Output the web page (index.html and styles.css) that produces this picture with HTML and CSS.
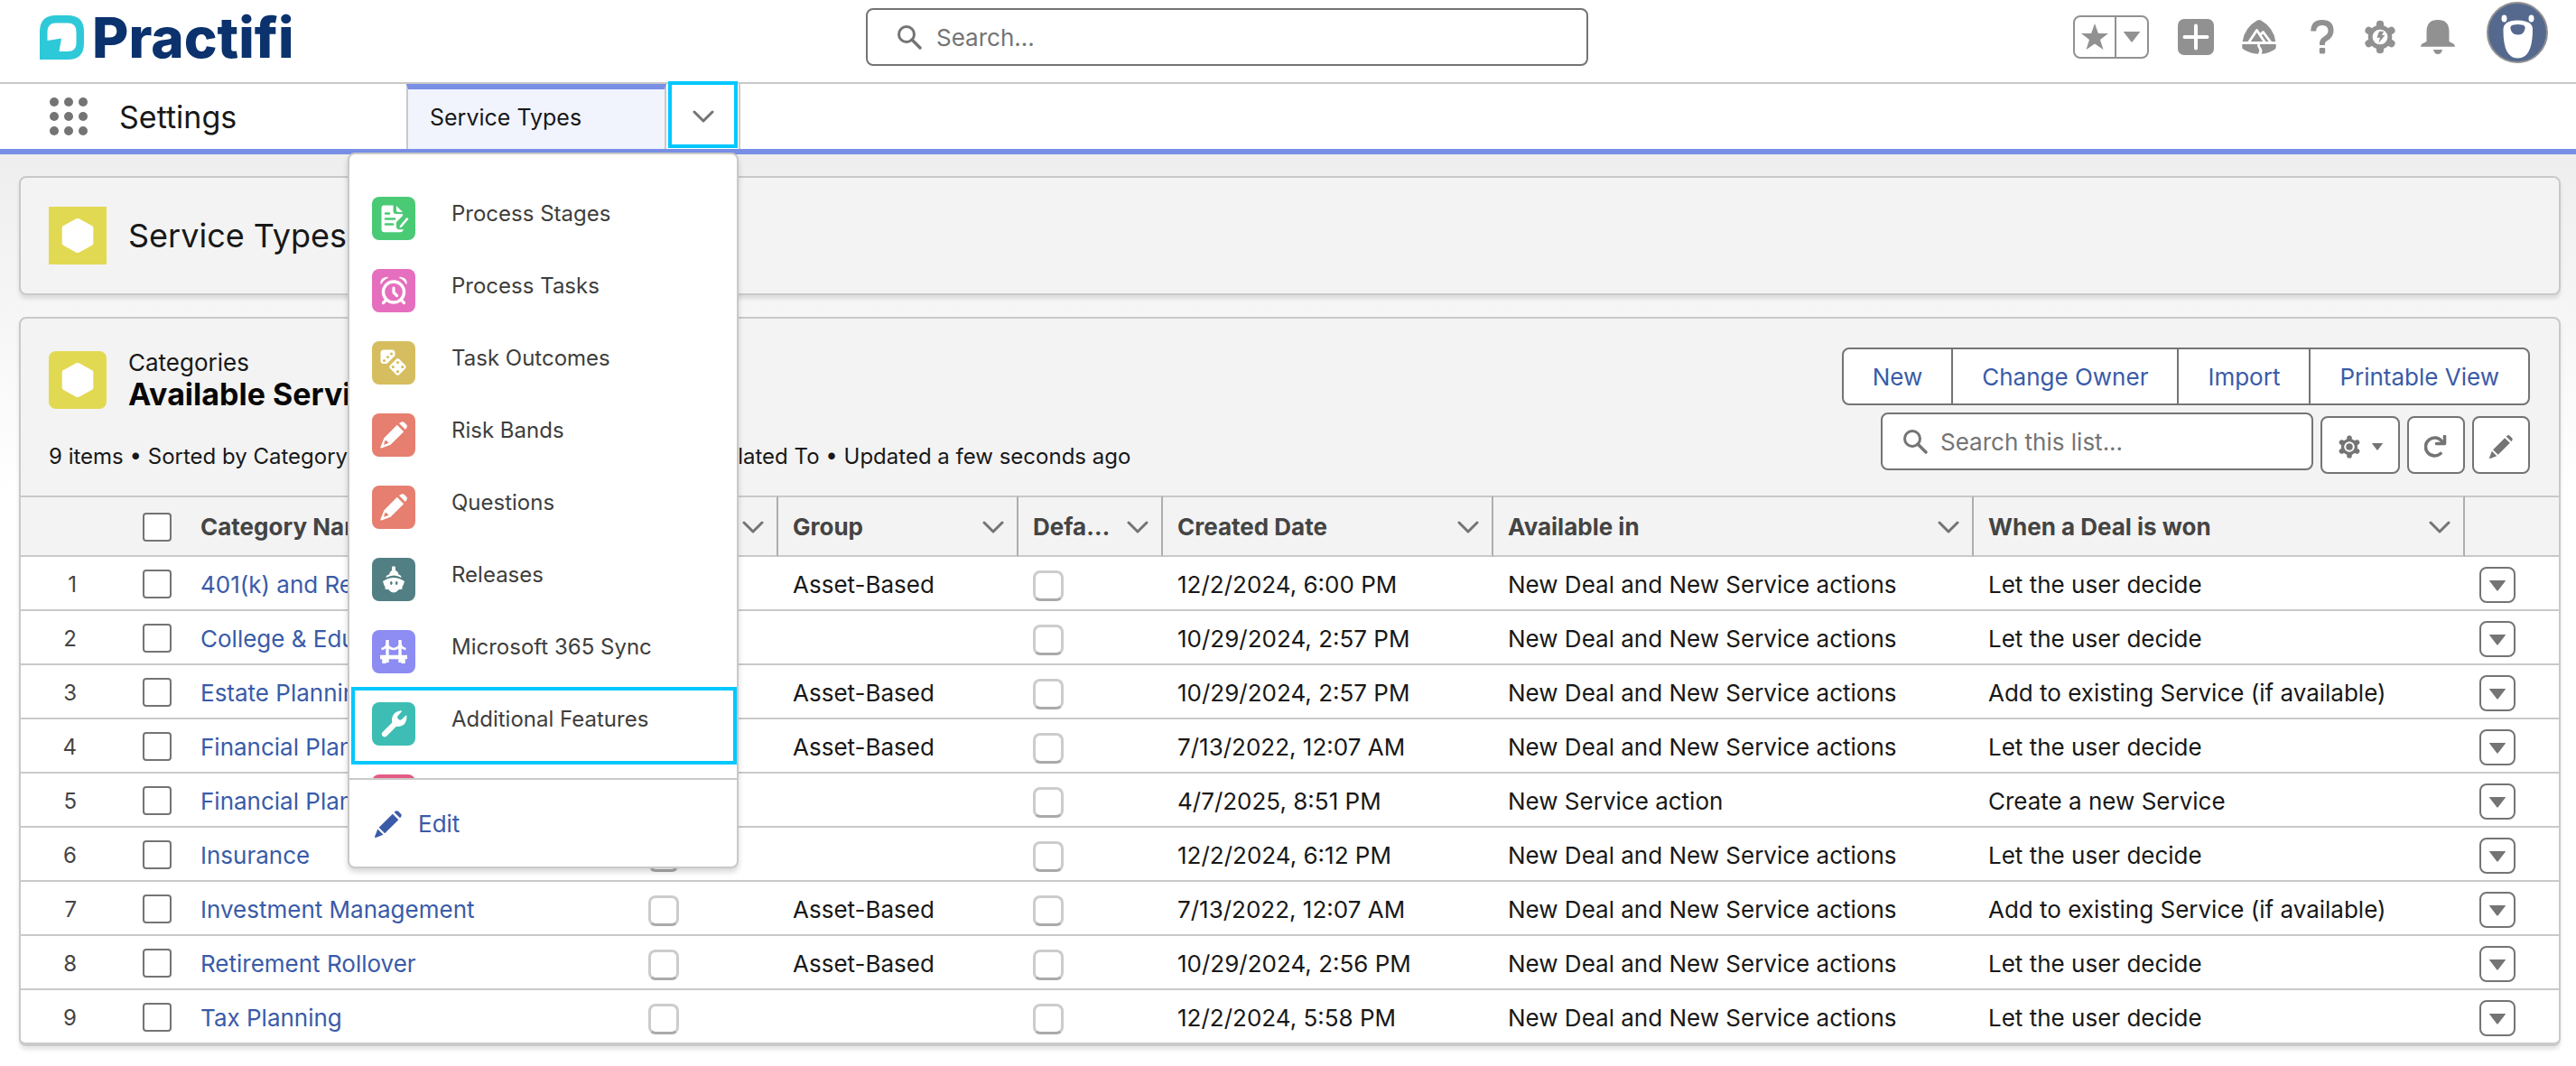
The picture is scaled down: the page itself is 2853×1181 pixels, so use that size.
FILE: index.html
```html
<!DOCTYPE html>
<html lang="en">
<head>
<meta charset="utf-8">
<title>Service Types | Practifi</title>
<link rel="stylesheet" href="styles.css">
</head>
<body>
<svg class="sprite" aria-hidden="true">
  <symbol id="i-search" viewBox="0 0 28 28"><circle cx="11" cy="11" r="8.5" fill="none" stroke="currentColor" stroke-width="3"/><path d="M17 17l9 9" stroke="currentColor" stroke-width="3.4" stroke-linecap="round"/></symbol>
  <symbol id="i-chevron" viewBox="0 0 24 14"><path d="M2 2l10 10L22 2" fill="none" stroke="currentColor" stroke-width="3" stroke-linecap="round" stroke-linejoin="round"/></symbol>
  <symbol id="i-caret" viewBox="0 0 18 12"><path d="M0.500 0h17q.8 0 .3.700L9.700 11.300q-.7.800-1.400 0L.2.700Q-.3 0 .5 0z" fill="currentColor"/></symbol>
  <symbol id="i-pencil" viewBox="0 0 30 30"><g fill="currentColor"><path d="M21.500 1.700l2-1.300q1.300-.7 2.500.4l3 3q1.100 1.200.4 2.500l-1.300 2z"/><path d="M19.800 3.700l6.500 6.500L11.200 25.200 4.700 18.700z"/><path d="M3.300 20.500l6.200 6.200-8.300 3.200Q-.2 30.200.1 28.800z"/></g></symbol>
  <symbol id="i-pencil-solid" viewBox="0 0 30 30"><path fill="#fff" d="M21 2l2.500-1.500q1.700-.9 3.200.5l2.300 2.300q1.400 1.500.5 3.200L28 9z"/><path fill="#fff" fill-rule="evenodd" d="M18.800 3.800l7.400 7.400L11.500 25.700 1.500 29.500Q0 29.800.4 28.300L4.400 18.300zM5.500 20.800L4 25.800l5.200-1.800q.3-1.400-.9-1.300.1-1.500-1.300-1.300z"/></symbol>
  <symbol id="i-hexagon" viewBox="0 0 64 64"><path d="M30.500 13.300q1.500-.8 3 0l14.500 8q1.300.8 1.300 2.300v16.800q0 1.500-1.300 2.300l-14.500 8q-1.500.8-3 0l-14.500-8q-1.300-.8-1.300-2.300V23.600q0-1.500 1.300-2.300z" fill="#fff"/></symbol>
  <symbol id="i-gear" viewBox="0 0 30 30"><g fill="currentColor"><rect x="11.800" y="0.500" width="6.400" height="29" rx="3"/><rect x="11.800" y="0.500" width="6.400" height="29" rx="3" transform="rotate(60 15 15)"/><rect x="11.800" y="0.500" width="6.400" height="29" rx="3" transform="rotate(120 15 15)"/><circle cx="15" cy="15" r="10.500"/></g></symbol>
</svg>

<header class="topbar">
  <a class="logo" href="#">
    <svg class="logo-mark" viewBox="0 0 49 49" aria-hidden="true"><path fill="#2ec9d8" fill-rule="evenodd" d="M0 49V18Q0 0 18 0h13q18 0 18 18v13q0 18-18 18zM8.500 28l15.500-2.500-2.500 14.500h9q10 0 10-9V18q0-9.500-9.500-9.500H18Q8.500 8.500 8.500 18z"/></svg>
    <span>Practifi</span>
  </a>
  <label class="search global-search">
    <svg class="search-icon" aria-hidden="true"><use href="#i-search"/></svg>
    <input type="search" placeholder="Search..." aria-label="Search">
  </label>
  <div class="tools">
    <div class="favorites">
      <button type="button" aria-label="Favorites"><svg width="30" height="30" viewBox="0 0 30 30"><path fill="currentColor" d="M15 0l3.900 11H30l-9 6.900L24.500 29 15 22.400 5.500 29 9 17.900 0 11h11.100z"/></svg></button>
      <button type="button" aria-label="Favorites list"><svg width="18" height="12"><use href="#i-caret"/></svg></button>
    </div>
    <button type="button" class="tool spaced" aria-label="Global actions"><svg width="40" height="40" viewBox="0 0 40 40"><rect width="40" height="40" rx="7" fill="currentColor"/><path d="M20 7.500v25M7.500 20h25" stroke="#fff" stroke-width="4" stroke-linecap="round"/></svg></button>
    <button type="button" class="tool spaced" aria-label="Guidance center"><svg width="38" height="38" viewBox="0 0 38 38"><path fill="currentColor" d="M.7 24Q3 8.500 17 .6q2-1.200 4 0Q35 8.500 37.300 24z"/><path fill="none" stroke="#fff" stroke-width="2.800" stroke-linejoin="round" d="M7.500 25L16.500 11.500 25.500 25M20 17l3.500-3.500L32 25"/><path fill="currentColor" d="M.3 27h17q-1 2.500 1 4.500 2 2.500-.5 6.200Q8 37.200.7 32q-.6-2-.4-5zM20 27h17.700q.3 3-.4 5-7 5.200-15.500 5.800 1.500-4-.5-6.500Q19.300 29 20 27z"/></svg></button>
    <button type="button" class="tool" aria-label="Help"><svg width="26" height="38" viewBox="0 0 26 38"><path d="M3.200 12.500Q3.500 3 12.800 3q9.700 0 9.700 9 0 5.500-5.500 8.500-4 2.300-4 5.500v2" fill="none" stroke="currentColor" stroke-width="6"/><rect x="9.800" y="31" width="6.400" height="6.400" rx="1.300" fill="currentColor"/></svg></button>
    <button type="button" class="tool" aria-label="Setup"><svg width="38" height="38" viewBox="0 0 30 30"><use href="#i-gear" width="30" height="30"/><circle cx="15" cy="15" r="6.600" fill="#fff"/><path fill="currentColor" d="M14.200 10h4l-1.500 3.500h2.600l-5.600 6.800 1.300-4.700h-2.800z"/></svg></button>
    <button type="button" class="tool" aria-label="Notifications"><svg width="38" height="38" viewBox="0 0 38 38"><path fill="currentColor" d="M6.500 24V13Q6.500 0 19 0t12.500 13v11l5.200 2.700q1.300 1 1.100 3H.2q-.2-2 1.100-3zM14 33h10q-1 5-5 5t-5-5z"/></svg></button>
    <button type="button" class="avatar" aria-label="View profile"><svg width="68" height="68" viewBox="0 0 68 68"><circle cx="34" cy="34" r="33" fill="#54698d" stroke="#919191" stroke-width="2"/><ellipse cx="19.500" cy="18.500" rx="3" ry="4" fill="#fff"/><ellipse cx="49.500" cy="18.500" rx="3" ry="4" fill="#fff"/><path fill="#fff" d="M34.500 20.500q8 0 13 3 3.500 2.500 3.500 7 0 32-16.500 32t-16-32q0-4.500 3.500-7 4-3 12.500-3z"/><path fill="#54698d" d="M34.500 25q5 0 7 1.500 1.500 1 1 3.500-1.500 6.500-8 6.500t-8-6.500q-.5-2.500 1-3.500 2-1.500 7-1.500z"/></svg></button>
  </div>
</header>

<nav class="appnav" aria-label="Settings">
  <div class="app">
    <button type="button" class="waffle" aria-label="App launcher"><i></i><i></i><i></i><i></i><i></i><i></i><i></i><i></i><i></i></button>
    <span class="app-name">Settings</span>
  </div>
  <a class="tab" href="#">Service Types</a>
  <div class="tab-more">
    <button type="button" class="more-button marked" aria-label="More items" aria-expanded="true"><svg width="24" height="14"><use href="#i-chevron"/></svg></button>
    <div class="menu">
      <ul class="menu-list">
        <li><a href="#"><svg class="obj green" viewBox="0 0 48 48"><path fill="#fff" d="M13 9.500h10.500V16q0 3 3 3h7.500v2l-7 7v6q1 2.500 3 2.300h5q-1 3-4 3H14q-3.500 0-3.500-3.500V13q0-3.500 2.500-3.500zM27 10l7 7h-5q-2 0-2-2zM38.500 23l2 1.500-7.500 9-2.500 1 .6-2.500z"/><path d="M15 18.500h4M15 24.500h10M15 30.500h8" stroke="#4bca76" stroke-width="2.600" stroke-linecap="round"/></svg><span>Process Stages</span></a></li>
        <li><a href="#"><svg class="obj pink" viewBox="0 0 48 48"><circle cx="24" cy="25.500" r="11.500" fill="none" stroke="#fff" stroke-width="3.400"/><path d="M24 21v5l3.500 3.500M16 34l-3.500 3.500M32 34l3.500 3.500" fill="none" stroke="#fff" stroke-width="3.200" stroke-linecap="round"/><path fill="#fff" d="M10 16q0-6 7-6.500-5 2-7 6.500zM38 16q0-6-7-6.500 5 2 7 6.500z" stroke="#fff" stroke-width="1.500" stroke-linejoin="round"/></svg><span>Process Tasks</span></a></li>
        <li><a href="#"><svg class="obj gold" viewBox="0 0 48 48"><path fill="#fff" d="M13 9.500h9q3.500 0 3.500 3.500v3L18 23.500q-1.500 1.500-3 1.500h-2q-3.500 0-3.500-3.500V13q0-3.500 3.500-3.500z"/><rect x="21.200" y="21.200" width="14.500" height="14.500" rx="2.500" fill="#fff" transform="rotate(45 28.500 28.500)"/><g fill="#d6bd5f"><circle cx="21.500" cy="14" r="1.600"/><circle cx="17.500" cy="17.500" r="1.600"/><circle cx="13.500" cy="21.500" r="1.600"/><circle cx="28.500" cy="23.500" r="1.600"/><circle cx="23.300" cy="28.500" r="1.600"/><circle cx="33.700" cy="28.500" r="1.600"/><circle cx="28.500" cy="33.700" r="1.600"/></g></svg><span>Task Outcomes</span></a></li>
        <li><a href="#"><svg class="obj coral" viewBox="0 0 48 48"><use href="#i-pencil-solid" x="9" y="9" width="30" height="30"/></svg><span>Risk Bands</span></a></li>
        <li><a href="#"><svg class="obj coral" viewBox="0 0 48 48"><use href="#i-pencil-solid" x="9" y="9" width="30" height="30"/></svg><span>Questions</span></a></li>
        <li><a href="#"><svg class="obj teal" viewBox="0 0 48 48"><path fill="#fff" d="M22 10q2-1.500 4 0v4q3 1 3.500 4.500 3 .5 3 3.500-8-5-17 0 0-3 3.500-3.500Q19.500 15 22 14z"/><path fill="#fff" fill-rule="evenodd" d="M12 26q12-8 24 0-1 4-2.500 6v2.500q-2 .5-3.500.5-3 3.500-6 3.500t-6-3.500q-1.500 0-3.500-.5V32Q13 30 12 26zM21.300 26a1.300 2 0 1 0 .01 0zM27.200 26a1.300 2 0 1 0 .01 0z"/></svg><span>Releases</span></a></li>
        <li><a href="#"><svg class="obj violet" viewBox="0 0 48 48"><g fill="none" stroke="#fff" stroke-width="3.400"><path d="M9 30h30" stroke-width="4.500"/><path d="M17 11v25M31 11v25"/><path d="M13.500 30v7M34.500 30v7" stroke-width="4.500"/><path d="M10.500 21q5-1 6-5 3 5 7.500 5t7.500-5q1 4 6 5" stroke-width="2.600"/></g></svg><span>Microsoft 365 Sync</span></a></li>
        <li class="marked"><a href="#"><svg class="obj mint" viewBox="0 0 48 48"><path fill="#fff" d="M33 10.300l-4.500 5q-1 1.500.3 3l.8.800q1.500 1.200 3 .2l4.700-4.600q1-.6 1.200.7 0 7-4 9.800-3.500 2.300-7.500 1.500L16 37.800q-2 1.500-4.200-.2-2-2.300-.2-4.300L22.300 22.500q-1-5 1.200-8.300Q26.500 9.600 32 9.300q1.500 0 1 1z"/></svg><span>Additional Features</span></a></li>
        <li><a href="#" aria-label="More"><svg class="obj rose" viewBox="0 0 48 48"></svg></a></li>
      </ul>
      <a class="menu-edit" href="#"><svg width="30" height="30"><use href="#i-pencil"/></svg>Edit</a>
    </div>
  </div>
</nav>

<main class="page">
  <section class="card page-head">
    <svg class="entity square" viewBox="0 0 64 64"><use href="#i-hexagon"/></svg>
    <h1>Service Types</h1>
  </section>

  <section class="card list">
    <div class="list-head">
      <div class="list-info">
        <div class="list-title">
          <svg class="entity" viewBox="0 0 64 64"><use href="#i-hexagon"/></svg>
          <div>
            <p>Categories</p>
            <h2>Available Services</h2>
          </div>
        </div>
        <p class="meta">9 items • Sorted by Category Name • Filtered by all categories - Related To • Updated a few seconds ago</p>
      </div>
      <div class="list-actions">
        <div class="button-group">
          <button type="button">New</button>
          <button type="button">Change Owner</button>
          <button type="button">Import</button>
          <button type="button">Printable View</button>
        </div>
        <div class="list-tools">
          <label class="search list-search">
            <svg class="search-icon" aria-hidden="true"><use href="#i-search"/></svg>
            <input type="search" placeholder="Search this list..." aria-label="Search this list">
          </label>
          <button type="button" class="icon-button wide" aria-label="List view controls"><svg width="26" height="26" viewBox="0 0 30 30"><use href="#i-gear" width="30" height="30"/><circle cx="15" cy="15" r="5.500" fill="none" stroke="#fff" stroke-width="2.400"/></svg><svg width="12" height="8"><use href="#i-caret"/></svg></button>
          <button type="button" class="icon-button" aria-label="Refresh"><svg width="26" height="26" viewBox="0 0 26 26"><path d="M18 20.500A10 10 0 1 1 19.500 7" fill="none" stroke="currentColor" stroke-width="3.600" stroke-linecap="round"/><path d="M13.500 9.500h9V1.500" fill="none" stroke="currentColor" stroke-width="3.600" stroke-linecap="round" stroke-linejoin="round"/></svg></button>
          <button type="button" class="icon-button" aria-label="Edit list"><svg width="26" height="26"><use href="#i-pencil"/></svg></button>
        </div>
      </div>
    </div>

    <table>
      <colgroup><col class="c-num"><col class="c-check"><col class="c-name"><col class="c-active"><col class="c-group"><col class="c-default"><col class="c-created"><col class="c-available"><col class="c-won"><col class="c-menu"></colgroup>
      <thead>
        <tr>
          <th></th>
          <th class="plain"><input type="checkbox" class="box" aria-label="Select all"></th>
          <th class="plain"><div><span>Category Name</span><svg><use href="#i-chevron"/></svg></div></th>
          <th><div><span>Active</span><svg><use href="#i-chevron"/></svg></div></th>
          <th><div><span>Group</span><svg><use href="#i-chevron"/></svg></div></th>
          <th><div><span>Default</span><svg><use href="#i-chevron"/></svg></div></th>
          <th><div><span>Created Date</span><svg><use href="#i-chevron"/></svg></div></th>
          <th><div><span>Available in</span><svg><use href="#i-chevron"/></svg></div></th>
          <th><div><span>When a Deal is won</span><svg><use href="#i-chevron"/></svg></div></th>
          <th class="plain"></th>
        </tr>
      </thead>
      <tbody>
        <tr><td class="num">1</td><td><input type="checkbox" class="box" aria-label="Select row 1"></td><td><a href="#">401(k) and Retirement</a></td><td><input type="checkbox" class="flag" disabled aria-label="Active"></td><td>Asset-Based</td><td><input type="checkbox" class="flag" disabled aria-label="Default"></td><td>12/2/2024, 6:00 PM</td><td>New Deal and New Service actions</td><td>Let the user decide</td><td><button type="button" class="row-menu" aria-label="Row actions"><svg><use href="#i-caret"/></svg></button></td></tr>
        <tr><td class="num">2</td><td><input type="checkbox" class="box" aria-label="Select row 2"></td><td><a href="#">College &amp; Education</a></td><td><input type="checkbox" class="flag" disabled aria-label="Active"></td><td></td><td><input type="checkbox" class="flag" disabled aria-label="Default"></td><td>10/29/2024, 2:57 PM</td><td>New Deal and New Service actions</td><td>Let the user decide</td><td><button type="button" class="row-menu" aria-label="Row actions"><svg><use href="#i-caret"/></svg></button></td></tr>
        <tr><td class="num">3</td><td><input type="checkbox" class="box" aria-label="Select row 3"></td><td><a href="#">Estate Planning</a></td><td><input type="checkbox" class="flag" disabled aria-label="Active"></td><td>Asset-Based</td><td><input type="checkbox" class="flag" disabled aria-label="Default"></td><td>10/29/2024, 2:57 PM</td><td>New Deal and New Service actions</td><td>Add to existing Service (if available)</td><td><button type="button" class="row-menu" aria-label="Row actions"><svg><use href="#i-caret"/></svg></button></td></tr>
        <tr><td class="num">4</td><td><input type="checkbox" class="box" aria-label="Select row 4"></td><td><a href="#">Financial Planning</a></td><td><input type="checkbox" class="flag" disabled aria-label="Active"></td><td>Asset-Based</td><td><input type="checkbox" class="flag" disabled aria-label="Default"></td><td>7/13/2022, 12:07 AM</td><td>New Deal and New Service actions</td><td>Let the user decide</td><td><button type="button" class="row-menu" aria-label="Row actions"><svg><use href="#i-caret"/></svg></button></td></tr>
        <tr><td class="num">5</td><td><input type="checkbox" class="box" aria-label="Select row 5"></td><td><a href="#">Financial Planning</a></td><td><input type="checkbox" class="flag" disabled aria-label="Active"></td><td></td><td><input type="checkbox" class="flag" disabled aria-label="Default"></td><td>4/7/2025, 8:51 PM</td><td>New Service action</td><td>Create a new Service</td><td><button type="button" class="row-menu" aria-label="Row actions"><svg><use href="#i-caret"/></svg></button></td></tr>
        <tr><td class="num">6</td><td><input type="checkbox" class="box" aria-label="Select row 6"></td><td><a href="#">Insurance</a></td><td><input type="checkbox" class="flag" disabled aria-label="Active"></td><td></td><td><input type="checkbox" class="flag" disabled aria-label="Default"></td><td>12/2/2024, 6:12 PM</td><td>New Deal and New Service actions</td><td>Let the user decide</td><td><button type="button" class="row-menu" aria-label="Row actions"><svg><use href="#i-caret"/></svg></button></td></tr>
        <tr><td class="num">7</td><td><input type="checkbox" class="box" aria-label="Select row 7"></td><td><a href="#">Investment Management</a></td><td><input type="checkbox" class="flag" disabled aria-label="Active"></td><td>Asset-Based</td><td><input type="checkbox" class="flag" disabled aria-label="Default"></td><td>7/13/2022, 12:07 AM</td><td>New Deal and New Service actions</td><td>Add to existing Service (if available)</td><td><button type="button" class="row-menu" aria-label="Row actions"><svg><use href="#i-caret"/></svg></button></td></tr>
        <tr><td class="num">8</td><td><input type="checkbox" class="box" aria-label="Select row 8"></td><td><a href="#">Retirement Rollover</a></td><td><input type="checkbox" class="flag" disabled aria-label="Active"></td><td>Asset-Based</td><td><input type="checkbox" class="flag" disabled aria-label="Default"></td><td>10/29/2024, 2:56 PM</td><td>New Deal and New Service actions</td><td>Let the user decide</td><td><button type="button" class="row-menu" aria-label="Row actions"><svg><use href="#i-caret"/></svg></button></td></tr>
        <tr><td class="num">9</td><td><input type="checkbox" class="box" aria-label="Select row 9"></td><td><a href="#">Tax Planning</a></td><td><input type="checkbox" class="flag" disabled aria-label="Active"></td><td></td><td><input type="checkbox" class="flag" disabled aria-label="Default"></td><td>12/2/2024, 5:58 PM</td><td>New Deal and New Service actions</td><td>Let the user decide</td><td><button type="button" class="row-menu" aria-label="Row actions"><svg><use href="#i-caret"/></svg></button></td></tr>
      </tbody>
    </table>
  </section>
</main>
</body>
</html>
```

FILE: styles.css
```css
:root {
  --line: #c9c9c9;
  --icon: #747474;
  --tool: #919191;
  --text: #181818;
  --link: #3a5ba8;
  --brand: #788fe5;
  --mark: #00c8ff;
  --panel: #f3f3f3;
}

* { box-sizing: border-box; }

body {
  margin: 0;
  background: #fff;
  color: var(--text);
  font: 26px/36px Inter, "Liberation Sans", sans-serif;
}

button, input { font: inherit; color: inherit; }
button { margin: 0; padding: 0; border: 0; background: none; cursor: pointer; }
button svg { display: block; flex: none; }
a { color: var(--link); text-decoration: none; }
h1, h2, p, ul { margin: 0; padding: 0; list-style: none; }
.sprite { position: absolute; width: 0; height: 0; }

/* Top bar */
.topbar {
  display: grid;
  grid-template-columns: 959fr 800fr 1094fr;
  align-items: start;
  height: 93px;
  border-bottom: 2px solid var(--line);
}
.logo {
  display: flex;
  align-items: center;
  gap: 9px;
  height: 83px;
  padding-left: 44px;
  color: #0b326d;
  font-size: 62px;
  font-weight: 800;
}
.logo-mark { width: 49px; height: 49px; }
.search {
  display: flex;
  align-items: center;
  height: 64px;
  padding-left: 32px;
  border: 2px solid var(--icon);
  border-radius: 8px;
  background: #fff;
}
.search-icon { flex: none; width: 28px; height: 28px; color: var(--icon); }
.search input {
  flex: 1;
  min-width: 0;
  height: 100%;
  padding: 0 16px;
  border: 0;
  outline: 0;
  background: none;
}
.search input::placeholder { color: var(--icon); opacity: 1; }
.global-search { margin-top: 9px; }
.tools {
  display: flex;
  align-items: center;
  justify-content: flex-end;
  height: 82px;
  padding-right: 31px;
  color: var(--tool);
}
.favorites {
  display: flex;
  height: 48px;
  margin-right: 32px;
  border: 2px solid var(--tool);
  border-radius: 8px;
}
.favorites button { display: grid; place-items: center; width: 44px; }
.favorites button + button { width: 36px; border-left: 2px solid var(--tool); }
.tool { display: grid; place-items: center; width: 40px; margin-right: 24px; }
.tool.spaced { margin-right: 30px; }
.avatar { align-self: flex-start; margin: 2px 0 0 10px; }

/* App navigation */
.appnav {
  display: flex;
  height: 78px;
  border-bottom: 6px solid var(--brand);
}
.app { display: flex; align-items: center; gap: 35px; width: 450px; padding-left: 55px; }
.waffle { display: grid; grid-template-columns: repeat(3, 10px); gap: 6px; }
.waffle i { height: 10px; border-radius: 50%; background: var(--icon); }
.app-name { padding-top: 2px; font-size: 34px; }
.tab {
  display: flex;
  align-items: center;
  width: 288px;
  padding: 0 24px 4px;
  border: solid var(--line);
  border-width: 0 2px;
  border-top: 6px solid var(--brand);
  background: #f1f4fd;
  color: var(--text);
  font-size: 25px;
}
.tab-more { position: relative; width: 82px; padding-left: 2px; border-right: 2px solid var(--line); }
.more-button { display: grid; place-items: center; width: 77px; height: 74px; margin-top: -3px; padding-top: 4px; color: var(--icon); }
.more-button.marked { border: 4px solid var(--mark); background: #fff; }

/* Overflow menu */
.menu {
  position: absolute;
  z-index: 10;
  top: 76px;
  right: 0;
  width: 433px;
  border: 2px solid var(--line);
  border-radius: 8px;
  background: #fff;
  box-shadow: 0 4px 6px rgba(0, 0, 0, .16);
}
.menu-list { height: 691px; padding: 33px 3px 0 5px; overflow: hidden; }
.menu-list li { height: 80px; padding: 14px 20px; }
.menu-list li.marked { outline: 4px solid var(--mark); outline-offset: -1px; }
.menu-list a { display: flex; align-items: flex-start; gap: 40px; color: #3e3e3c; font-size: 24px; line-height: 38px; }
.obj { flex: none; width: 48px; height: 48px; border-radius: 8px; }
.green { background: #4bca76; }
.pink { background: #e56fbe; }
.gold { background: #d6bd5f; }
.coral { background: #e67f6f; }
.teal { background: #527f83; }
.violet { background: #8d8cf3; }
.mint { background: #3dbdb3; }
.rose { background: #e25c84; }
.menu-edit {
  display: flex;
  align-items: center;
  gap: 18px;
  height: 98px;
  padding: 2px 28px 0;
  border-top: 2px solid var(--line);
}

/* Page */
.page {
  display: grid;
  gap: 24px;
  padding: 24px 17px 20px 21px;
  background: linear-gradient(#eee, #fff 376px);
}
.card {
  min-width: 0;
  border: 2px solid var(--line);
  border-radius: 8px;
  background: var(--panel);
  box-shadow: 0 4px 4px rgba(0, 0, 0, .1);
}
.page-head { display: flex; align-items: center; gap: 24px; padding: 32px 31px; }
.entity { flex: none; width: 64px; height: 64px; border-radius: 8px; background: #e2d953; }
.entity.square { border-radius: 0; }
h1 { font-size: 36px; font-weight: 400; line-height: 40px; }
h2 { color: #080707; font-size: 34px; line-height: 36px; }

.list-head { display: flex; justify-content: space-between; padding: 32px 32px 24px 31px; }
.list-title { display: flex; align-items: flex-start; gap: 24px; height: 64px; margin-top: 4px; }
.list-title p { margin-top: -4px; line-height: 34px; }
.meta { margin-top: 35px; font-size: 24px; }
.list-actions { display: grid; justify-items: end; gap: 8px; }
.button-group {
  display: flex;
  height: 64px;
  border: 2px solid var(--icon);
  border-radius: 8px;
  background: #fff;
  color: var(--link);
}
.button-group button { padding: 1px 32px 0; }
.button-group button + button { border-left: 2px solid var(--icon); }
.list-tools { display: flex; align-items: flex-end; gap: 8px; }
.list-search { width: 479px; margin-bottom: 4px; padding-left: 22px; }
.list-search input { padding: 0 14px; }
.icon-button {
  display: flex;
  align-items: center;
  justify-content: center;
  gap: 12px;
  width: 64px;
  height: 64px;
  padding-top: 3px;
  border: 2px solid var(--icon);
  border-radius: 8px;
  background: #fff;
  color: var(--icon);
}
.icon-button.wide { width: 88px; }

/* Table */
table { width: 100%; border-collapse: separate; border-spacing: 0; table-layout: fixed; }
.c-num { width: 101px; }
.c-check { width: 82px; }
.c-active { width: 160px; }
.c-group { width: 266px; }
.c-default { width: 160px; }
.c-created { width: 366px; }
.c-available { width: 532px; }
.c-won { width: 544px; }
.c-menu { width: 104px; }
th {
  height: 68px;
  padding: 2px 14px 0 16px;
  border-top: 2px solid var(--line);
  border-bottom: 2px solid var(--line);
  border-right: 2px solid #aeaeae;
  color: #444;
  text-align: left;
}
th:first-child, th.plain { border-right: 0; }
th div { display: flex; align-items: center; justify-content: space-between; gap: 12px; }
th span { overflow: hidden; text-overflow: ellipsis; white-space: nowrap; }
th svg { flex: none; width: 24px; height: 14px; color: var(--icon); }
td { height: 60px; padding: 3px 16px 0; border-bottom: 2px solid var(--line); background: #fff; white-space: nowrap; }
tbody tr:last-child td:first-child { border-bottom-left-radius: 6px; }
tbody tr:last-child td:last-child { border-bottom-right-radius: 6px; }
.num { padding: 4px 39px 0 0; color: #444; font-size: 24px; text-align: right; }
th:nth-child(2), td:nth-child(2) { padding-top: 2px; padding-left: 34px; }
input[type="checkbox"] { display: block; margin: 0; appearance: none; background: #fff; }
.box { width: 32px; height: 32px; border: 2px solid var(--icon); border-radius: 4px; }
.flag { width: 34px; height: 34px; margin-top: 3px; border: 3px solid #ccc; border-bottom-color: #aaa; border-radius: 8px; }
td .flag { margin-top: 3px; }
.row-menu {
  display: grid;
  place-items: center;
  width: 40px;
  height: 40px;
  padding-top: 2px;
  border: 2px solid var(--icon);
  border-radius: 8px;
  color: var(--icon);
}
.row-menu svg { width: 18px; height: 12px; }
```
